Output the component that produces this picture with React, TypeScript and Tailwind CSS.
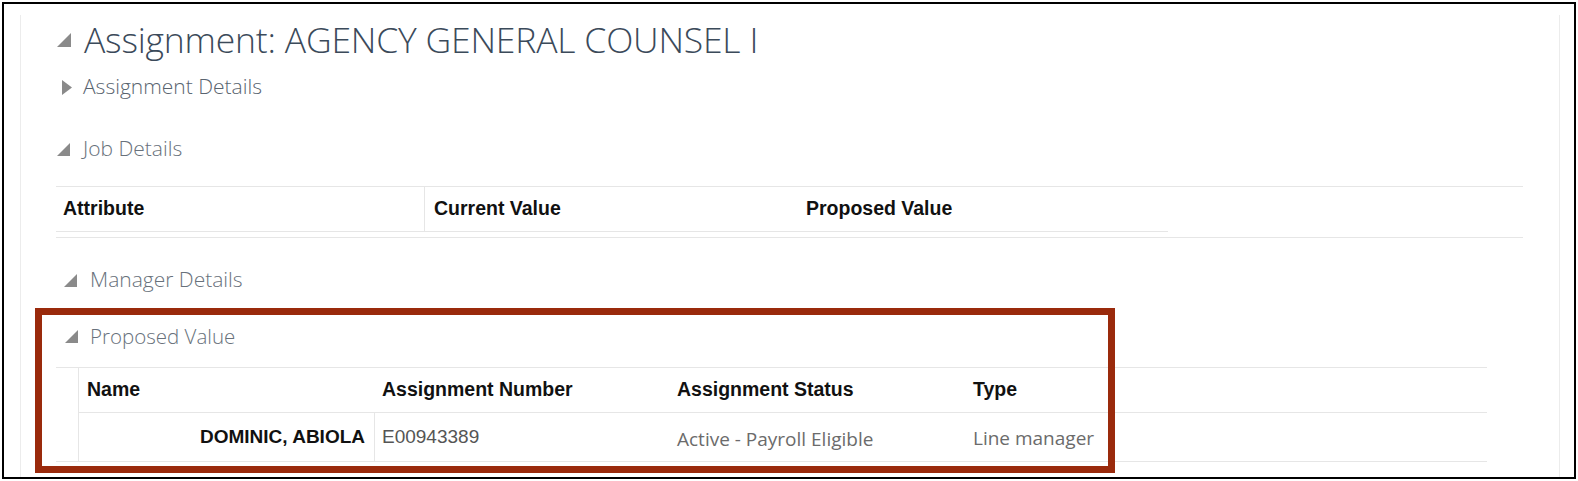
import React from 'react';

// disclosure icons, drawn like the Oracle ones
const Open: React.FC<{ size?: number }> = ({ size = 13 }) => (
  <svg width={size} height={size} viewBox="0 0 13 13" className="shrink-0">
    <polygon points="13,0 13,13 0,13" fill="#8a8a8a" />
  </svg>
);

const Closed: React.FC = () => (
  <svg width="10" height="15" viewBox="0 0 10 15" className="shrink-0">
    <polygon points="0,0 10,7.5 0,15" fill="#8a8a8a" />
  </svg>
);

const seg = "font-['Open_Sans','Noto_Sans',sans-serif]";
const ari = "font-['Liberation_Sans',Arial,sans-serif]";

const App: React.FC = () => {
  return (
    <div className="w-[1578px] h-[481px] bg-white p-[2px] overflow-hidden">
      <div className="h-full border-2 border-black pl-[16px] pr-[14px] pt-[11px]">
        <div className="relative h-full border-x border-[#ececec] pl-[35px]">
          {/* page title */}
          <div className="h-[50px] flex items-center pl-[1px]">
            <Open size={14} />
            <h1 className={`${seg} ml-[13px] text-[35.5px] font-light leading-none text-[#3b4a5a] tracking-[-0.2px]`}>
              Assignment: AGENCY GENERAL COUNSEL I
            </h1>
          </div>

          <div className="h-[44px] flex items-center pl-[6px]">
            <Closed />
            <span className={`${seg} ml-[11px] text-[21px] font-light text-[#59646f]`}>Assignment Details</span>
          </div>

          <div className="mt-[20px] h-[40px] flex items-center pl-[1px]">
            <Open />
            <span className={`${seg} ml-[13px] text-[21px] font-light text-[#68717b]`}>Job Details</span>
          </div>

          {/* job details table */}
          <div className={`${ari} mt-[17px] w-[1467px] border-t border-[#e6e6e6]`}>
            <div className="flex h-[45px] w-[1112px] border-b border-[#e6e6e6] text-[19.5px] font-bold text-[#111]">
              <div className="w-[369px] border-r border-[#e6e6e6] pl-[7px] flex items-center">Attribute</div>
              <div className="w-[373px] pl-[9px] flex items-center">Current Value</div>
              <div className="flex-1 pl-[8px] flex items-center">Proposed Value</div>
            </div>
            <div className="h-[5px]" />
            <div className="border-t border-[#e6e6e6]" />
          </div>

          <div className="mt-[22px] h-[40px] flex items-center pl-[8px]">
            <Open />
            <span className={`${seg} ml-[13px] text-[21px] font-light text-[#68717b]`}>Manager Details</span>
          </div>

          <div className="mt-[16px] h-[40px] flex items-center pl-[9px]">
            <Open />
            <span className={`${seg} ml-[12px] text-[20.5px] font-light text-[#68717b]`}>Proposed Value</span>
          </div>

          {/* manager table */}
          <div className={`${ari} mt-[11px] w-[1431px] flex border-y border-[#e6e6e6]`}>
            <div className="w-[23px] border-r border-[#e6e6e6]" />
            <div className="flex-1">
              <div className="flex h-[45px] border-b border-[#e6e6e6] text-[19.5px] font-bold text-[#111]">
                <div className="w-[296px] pl-[8px] flex items-center">Name</div>
                <div className="w-[294px] pl-[7px] flex items-center">Assignment Number</div>
                <div className="w-[296px] pl-[8px] flex items-center">Assignment Status</div>
                <div className="flex-1 pl-[8px] flex items-center">Type</div>
              </div>
              <div className="flex h-[48px] text-[19px]">
                <div className="w-[296px] border-r border-[#e6e6e6] pr-[9px] flex items-center justify-end font-bold text-[#111]">
                  DOMINIC, ABIOLA
                </div>
                <div className="w-[294px] pl-[7px] flex items-center text-[#555]">E00943389</div>
                <div className={`${seg} w-[296px] pl-[8px] pt-[5px] flex items-center text-[19px] text-[#6b6b6b]`}>
                  Active - Payroll Eligible
                </div>
                <div className={`${seg} flex-1 pl-[8px] pt-[3px] flex items-center text-[19px] text-[#6b6b6b]`}>
                  Line manager
                </div>
              </div>
            </div>
          </div>

          {/* red callout */}
          <div className="absolute left-[14px] top-[293px] w-[1080px] h-[165px] border-[7px] border-[#9a2a0c] pointer-events-none" />
        </div>
      </div>
    </div>
  );
};

export default App;
